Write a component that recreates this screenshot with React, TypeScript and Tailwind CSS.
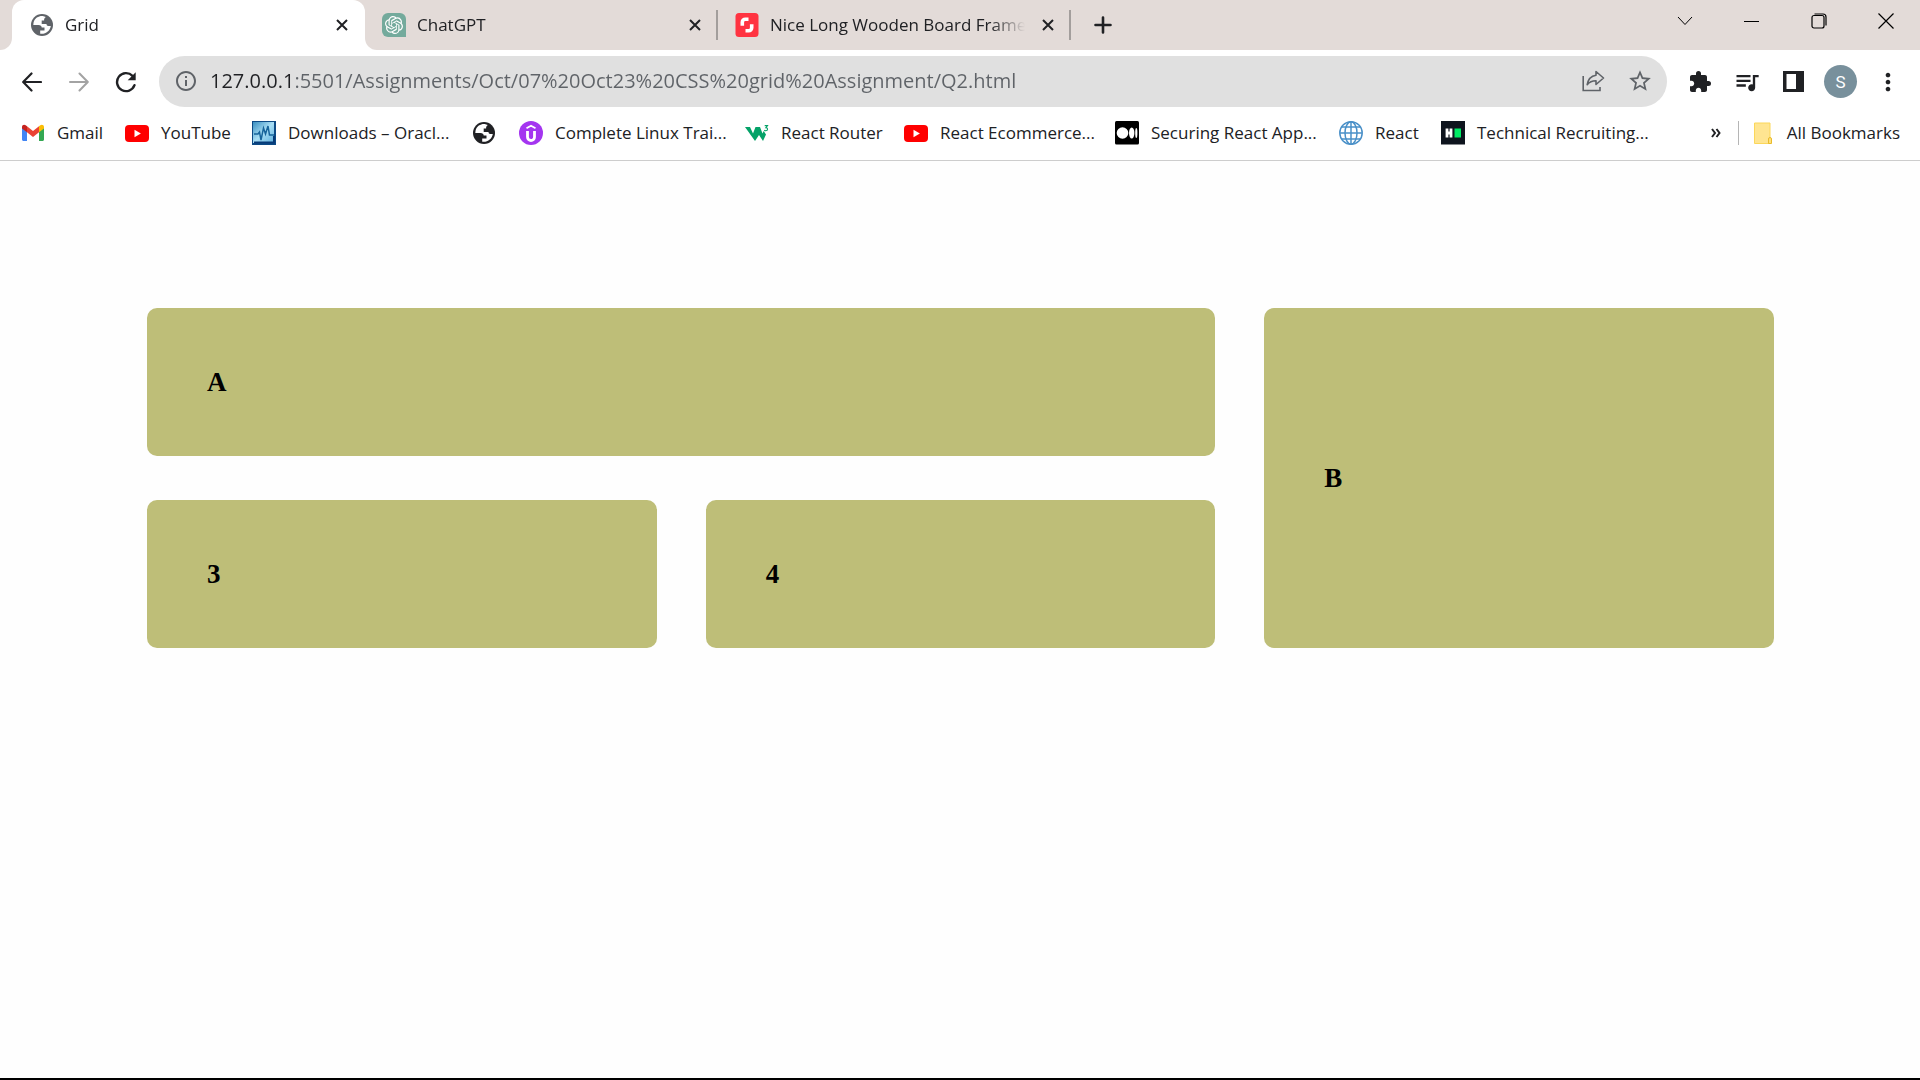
import type { ReactNode } from "react";
import { MdExtension, MdInfoOutline, MdMoreVert, MdQueueMusic, MdStarBorder } from "react-icons/md";
import { SiOpenai } from "react-icons/si";

function Earth({ className }: { className: string }) {
  return (
    <svg viewBox="0 0 24 24" className={className}>
      <circle cx="12" cy="12" r="11" fill="currentColor" />
      <path
        d="M13.5 3.2C9 2.6 5 4.9 3.6 9.2L3.3 12h5.2c2 0 3.2 1 3.2 2.6h2.8v2.8h-4.3v3.3c5 .9 10-2.7 10.6-7.7h-2.5c-1.2 0-1.8-.8-1.8-2h-4.8V7.6h2.4c0-1.7.3-2.7 1.7-3.5z"
        fill="#fff"
      />
    </svg>
  );
}

function OpenAiIcon() {
  return (
    <span className="flex size-6 items-center justify-center rounded-tl-md rounded-tr-md rounded-bl-md bg-[#74aa9c] text-white">
      <SiOpenai className="size-[18px]" />
    </span>
  );
}

function ShutterstockIcon() {
  return (
    <svg viewBox="0 0 24 24" className="size-6">
      <rect x="0.5" width="23" height="24" rx="3.5" fill="#ff3341" />
      <path d="M13.5 6.200h-3.200a3 3 0 0 0-3 3v3.500M10.500 17.800h3.200a3 3 0 0 0 3-3v-3.500" fill="none" stroke="#fff" strokeWidth="3.6" />
    </svg>
  );
}

function GmailIcon() {
  return (
    <svg viewBox="0 0 24 24" className="size-6">
      <path d="M1 6.200v12.300c0 .9.700 1.500 1.500 1.500H6v-9.400z" fill="#4285f4" />
      <path d="M18 10.600V20h3.500c.8 0 1.500-.6 1.500-1.500V6.200z" fill="#34a853" />
      <path d="M18 5.300v6l5-3.900V6c0-2-2.200-2.900-3.700-1.700z" fill="#fbbc04" />
      <path d="M6 11.300v-6l6 4.600 6-4.600v6l-6 4.600z" fill="#ea4335" />
      <path d="M1 6v1.400l5 3.900v-6L4.700 4.300C3.200 3.100 1 4 1 6z" fill="#c5221f" />
    </svg>
  );
}

function YouTubeIcon() {
  return (
    <svg viewBox="0 0 24 24" className="size-6">
      <rect y="4" width="24" height="17" rx="4" fill="#f00" />
      <path d="M9.5 8.800v7.400l6.400-3.700z" fill="#fff" />
    </svg>
  );
}

function OracleIcon() {
  return (
    <svg viewBox="0 0 24 24" className="size-6">
      <defs>
        <linearGradient id="oracle-sky" x1="0" y1="0" x2="1" y2="1">
          <stop offset="0" stopColor="#3a8fc0" />
          <stop offset="0.5" stopColor="#a8def5" />
          <stop offset="1" stopColor="#5fb0dc" />
        </linearGradient>
      </defs>
      <rect width="24" height="24" fill="#0d4a85" />
      <rect x="1" y="1" width="21" height="21" fill="url(#oracle-sky)" />
      <path d="M2 13h4l1.500-2L9 19l2.500-12 2 6 2.500-8 1.500 9H22" fill="none" stroke="#17649b" strokeWidth="1.5" />
      <path d="M2 21.500h20V15" fill="none" stroke="#063a78" strokeWidth="2" />
    </svg>
  );
}

function UdemyIcon() {
  return (
    <svg viewBox="0 0 24 24" className="size-6">
      <circle cx="12" cy="12" r="12" fill="#a435f0" />
      <path d="M7.500 7.300 12 4.700l4.500 2.600" fill="none" stroke="#fff" strokeWidth="1.8" />
      <path d="M8.500 10v6a3.500 3.500 0 0 0 7 0v-6" fill="none" stroke="#fff" strokeWidth="2.8" />
    </svg>
  );
}

function W3Icon() {
  return (
    <svg viewBox="0 0 24 24" className="size-6" fill="#04a268">
      <path d="M0 6h5l3 6.500L10.500 6H15l2.500 6.500 1.200-2.500 2.300 3.500-3 6.500-4-6-4 6z" />
      <path d="M19.700 4.600h2.800l-1.600 2c2.200 0 2.200 3.200-.1 3.200-.7 0-1.200-.2-1.500-.7" fill="none" stroke="#04a268" strokeWidth="1.1" />
    </svg>
  );
}

function MediumIcon() {
  return (
    <svg viewBox="0 0 24 24" className="size-6">
      <rect width="24" height="23.5" rx="1.5" />
      <g fill="#fff">
        <circle cx="7.5" cy="12" r="5.8" />
        <ellipse cx="16.7" cy="12" rx="2.7" ry="5.5" />
        <ellipse cx="21.3" cy="12" rx="1.1" ry="5" />
      </g>
    </svg>
  );
}

function WireGlobeIcon() {
  return (
    <svg viewBox="0 0 24 24" className="size-6" fill="none" stroke="#4a90c8" strokeWidth="1.5">
      <circle cx="12" cy="12" r="11.2" />
      <ellipse cx="12" cy="12" rx="6" ry="11.2" />
      <path d="M12 1v22M1 12h22M3 6h18M3 18h18" />
    </svg>
  );
}

function HackerRankIcon() {
  return (
    <svg viewBox="0 0 24 24" className="size-6">
      <rect width="24" height="23.5" fill="#0e141e" />
      <path d="M6 7.500v9M10 7.500v9M6 12h4" stroke="#fff" strokeWidth="2.8" />
      <rect x="13.5" y="7.5" width="6.5" height="9" fill="#00ea64" />
    </svg>
  );
}

function FolderIcon() {
  return (
    <svg viewBox="0 0 24 24" className="size-6">
      <path d="M3.500 2h15.500v20.500H3.500z" fill="#ffe591" stroke="#fbd75b" />
      <path d="M17.500 22.500v-4.500a1.500 1.500 0 0 1 3 0v4.500z" fill="#ffe07a" stroke="#e9bb2c" />
    </svg>
  );
}

function Cross({ className }: { className: string }) {
  return (
    <svg viewBox="0 0 12 12" className={className} fill="none" stroke="currentColor">
      <path d="M1 1l10 10M11 1 1 11" />
    </svg>
  );
}

function Tab({ icon, title, active, divider }: { icon: ReactNode; title: string; active?: boolean; divider?: boolean }) {
  return (
    <div
      className={
        active
          ? "relative flex w-[353px] items-center rounded-t-xl bg-white pl-[18px] pr-[13px]"
          : "relative flex w-[353px] items-center pl-[17px] pr-[13px]"
      }
    >
      {active && (
        <>
          <span className="absolute bottom-0 -left-3 size-3 bg-white">
            <span className="block size-full rounded-br-xl bg-[#e3dbd8]" />
          </span>
          <span className="absolute -right-3 bottom-0 size-3 bg-white">
            <span className="block size-full rounded-bl-xl bg-[#e3dbd8]" />
          </span>
        </>
      )}
      <button type="button" role="tab" aria-selected={!!active} className="flex min-w-0 flex-1 items-center gap-[11px] text-left">
        <span className="flex size-6 shrink-0 items-center justify-center">{icon}</span>
        <span className="w-[255px] overflow-hidden whitespace-nowrap [mask-image:linear-gradient(to_right,#000_220px,transparent_255px)]">
          {title}
        </span>
      </button>
      <button type="button" aria-label={`Close ${title}`} className="flex size-5 shrink-0 items-center justify-center">
        <Cross className="size-3 stroke-2" />
      </button>
      {divider && <span className="absolute right-0 h-[30px] w-0.5 bg-[#a39e9c]" />}
    </div>
  );
}

function ToolButton({ label, children }: { label: string; children: ReactNode }) {
  return (
    <button type="button" aria-label={label} className="flex h-10 w-[47px] shrink-0 items-center justify-center">
      {children}
    </button>
  );
}

function WindowButton({ label, children }: { label: string; children: ReactNode }) {
  return (
    <button type="button" aria-label={label} className="flex h-[42px] w-[67px] items-center justify-center">
      {children}
    </button>
  );
}

const bookmarks = [
  { label: "Gmail", icon: <GmailIcon />, width: "w-[104px]" },
  { label: "YouTube", icon: <YouTubeIcon />, width: "w-[127px]" },
  { label: "Downloads – Oracl...", icon: <OracleIcon />, width: "w-[220px]" },
  { label: "", icon: <Earth className="size-6 text-[#202124]" />, width: "w-[47px]" },
  { label: "Complete Linux Trai...", icon: <UdemyIcon />, width: "w-[226px]" },
  { label: "React Router", icon: <W3Icon />, width: "w-[159px]" },
  { label: "React Ecommerce...", icon: <YouTubeIcon />, width: "w-[211px]" },
  { label: "Securing React App...", icon: <MediumIcon />, width: "w-[224px]" },
  { label: "React", icon: <WireGlobeIcon />, width: "w-[102px]" },
  { label: "Technical Recruiting...", icon: <HackerRankIcon />, width: "w-[216px]" },
];

const cells = [
  { label: "A", span: "col-span-2" },
  { label: "B", span: "row-span-2" },
  { label: "3", span: "" },
  { label: "4", span: "" },
];

export default function App() {
  return (
    <div className="flex min-h-screen flex-col border-b-2 border-black bg-white font-['Open_Sans','Noto_Sans',sans-serif] text-[17px] leading-6 text-[#202124]">
      <header>
        <div className="flex h-[50px] bg-[#e3dbd8] pl-3">
          <div role="tablist" className="flex">
            <Tab active title="Grid" icon={<Earth className="size-6 text-[#5f6368]" />} />
            <Tab divider title="ChatGPT" icon={<OpenAiIcon />} />
            <Tab divider title="Nice Long Wooden Board Frame" icon={<ShutterstockIcon />} />
          </div>
          <button type="button" aria-label="New tab" className="flex w-16 items-center justify-center">
            <svg viewBox="0 0 18 18" className="size-[18px]" stroke="currentColor" strokeWidth="2.6" strokeLinecap="round">
              <path d="M9 1.500v15M1.500 9h15" />
            </svg>
          </button>
          <div className="ml-auto flex pr-px text-black">
            <WindowButton label="Search tabs">
              <svg viewBox="0 0 16 10" className="w-4" fill="none" stroke="currentColor">
                <path d="M1 1l7 7.500L15 1" />
              </svg>
            </WindowButton>
            <WindowButton label="Minimize">
              <span className="h-px w-[15px] bg-black" />
            </WindowButton>
            <WindowButton label="Restore">
              <svg viewBox="0 0 16 16" className="size-4" fill="none" stroke="currentColor" strokeWidth="1.2">
                <rect x="1" y="2.5" width="12" height="12.5" rx="2" />
                <path d="M3.500 1h8.500a3 3 0 0 1 3 3v8.500" />
              </svg>
            </WindowButton>
            <WindowButton label="Close">
              <Cross className="size-[18px] stroke-[0.8]" />
            </WindowButton>
          </div>
        </div>

        <div className="flex items-center pt-1.5 pr-[9px] pl-2">
          <ToolButton label="Back">
            <svg viewBox="0 0 20 20" className="size-5" fill="none" stroke="currentColor" strokeWidth="2.2" strokeLinecap="round" strokeLinejoin="round">
              <path d="M19 10H1.500M9.500 1.500 1.200 10l8.300 8.500" />
            </svg>
          </ToolButton>
          <ToolButton label="Forward">
            <svg viewBox="0 0 20 20" className="size-5 text-[#a3a3a3]" fill="none" stroke="currentColor" strokeWidth="2" strokeLinecap="round" strokeLinejoin="round">
              <path d="M1 10h17.500M10.500 1.500l8.300 8.500-8.300 8.500" />
            </svg>
          </ToolButton>
          <ToolButton label="Reload">
            <svg viewBox="0 0 22 22" className="size-[22px]">
              <path d="M19.500 14.200A9 9 0 1 1 17.500 4.800" fill="none" stroke="currentColor" strokeWidth="2.4" strokeLinecap="round" />
              <path d="M20.700 1.200v8h-8z" fill="currentColor" />
            </svg>
          </ToolButton>
          <div className="mr-[9px] ml-[10px] flex h-[51px] min-w-0 flex-1 items-center rounded-full bg-[#e0e0e0] pr-1 pb-px pl-[15px] text-[#5f6368]">
            <button type="button" aria-label="View site information" className="mr-3">
              <MdInfoOutline className="size-6" />
            </button>
            <input
              type="text"
              aria-label="Address"
              spellCheck={false}
              defaultValue="127.0.0.1:5501/Assignments/Oct/07%20Oct23%20CSS%20grid%20Assignment/Q2.html"
              className="min-w-0 flex-1 bg-[linear-gradient(to_right,#202124_81px,#5f6368_81px)] bg-clip-text text-xl leading-7 text-transparent caret-black outline-none"
            />
            <ToolButton label="Share this page">
              <svg viewBox="0 0 24 24" className="size-6" fill="none" stroke="currentColor" strokeWidth="1.6">
                <path d="M2.200 7v14.500H19V18" />
                <path d="M15 2.500 22.500 9 15 15.500v-3.800c-4 0-6.500 1-8.800 4C7 10.500 9.500 7 15 6.200z" strokeLinejoin="round" />
              </svg>
            </ToolButton>
            <ToolButton label="Bookmark this tab">
              <MdStarBorder className="size-[26px]" />
            </ToolButton>
          </div>
          <ToolButton label="Extensions">
            <MdExtension className="size-6" />
          </ToolButton>
          <ToolButton label="Media controls">
            <MdQueueMusic className="size-7" />
          </ToolButton>
          <ToolButton label="Side panel">
            <svg viewBox="0 0 21 21" className="size-[21px]">
              <path d="M0 0h21v21H0zM3.500 3v15H13V3z" fill="currentColor" fillRule="evenodd" />
            </svg>
          </ToolButton>
          <ToolButton label="Profile">
            <span className="flex size-[33px] items-center justify-center rounded-full bg-[#78909c] font-[Roboto,sans-serif] text-white">
              S
            </span>
          </ToolButton>
          <ToolButton label="Menu">
            <MdMoreVert className="size-7" />
          </ToolButton>
        </div>

        <nav aria-label="Bookmarks" className="flex h-[54px] items-center border-b border-[#cdcdcd] pr-5 pb-0.5 pl-[21px]">
          {bookmarks.map((b, i) => (
            <a key={i} href="#" aria-label={b.label || "Bookmark"} className={`flex shrink-0 items-center gap-3 whitespace-nowrap ${b.width}`}>
              {b.icon}
              {b.label && <span>{b.label}</span>}
            </a>
          ))}
          <button type="button" aria-label="More bookmarks" className="ml-auto flex h-6 w-8 items-center justify-center">
            <svg viewBox="0 0 10 10" className="size-[10px]" fill="none" stroke="currentColor" strokeWidth="2">
              <path d="M1 1l3 4-3 4M5.500 1l3 4-3 4" />
            </svg>
          </button>
          <span className="ml-1.5 h-6 w-px bg-[#b5b5b5]" />
          <a href="#" className="ml-3 flex items-center gap-3 whitespace-nowrap">
            <FolderIcon />
            <span>All Bookmarks</span>
          </a>
        </nav>
      </header>

      <main className="flex-1 bg-[#fefefe] pt-[147px] pr-[146px] pl-[147px]">
        <div className="grid auto-rows-[148px] grid-cols-3 gap-x-[49px] gap-y-11 font-['Liberation_Serif',serif] text-[27px] leading-8 font-bold text-black">
          {cells.map((c) => (
            <div key={c.label} className={`flex items-center rounded-[10px] bg-[#bebe78] px-[60px] ${c.span}`}>
              <h3>{c.label}</h3>
            </div>
          ))}
        </div>
      </main>
    </div>
  );
}
